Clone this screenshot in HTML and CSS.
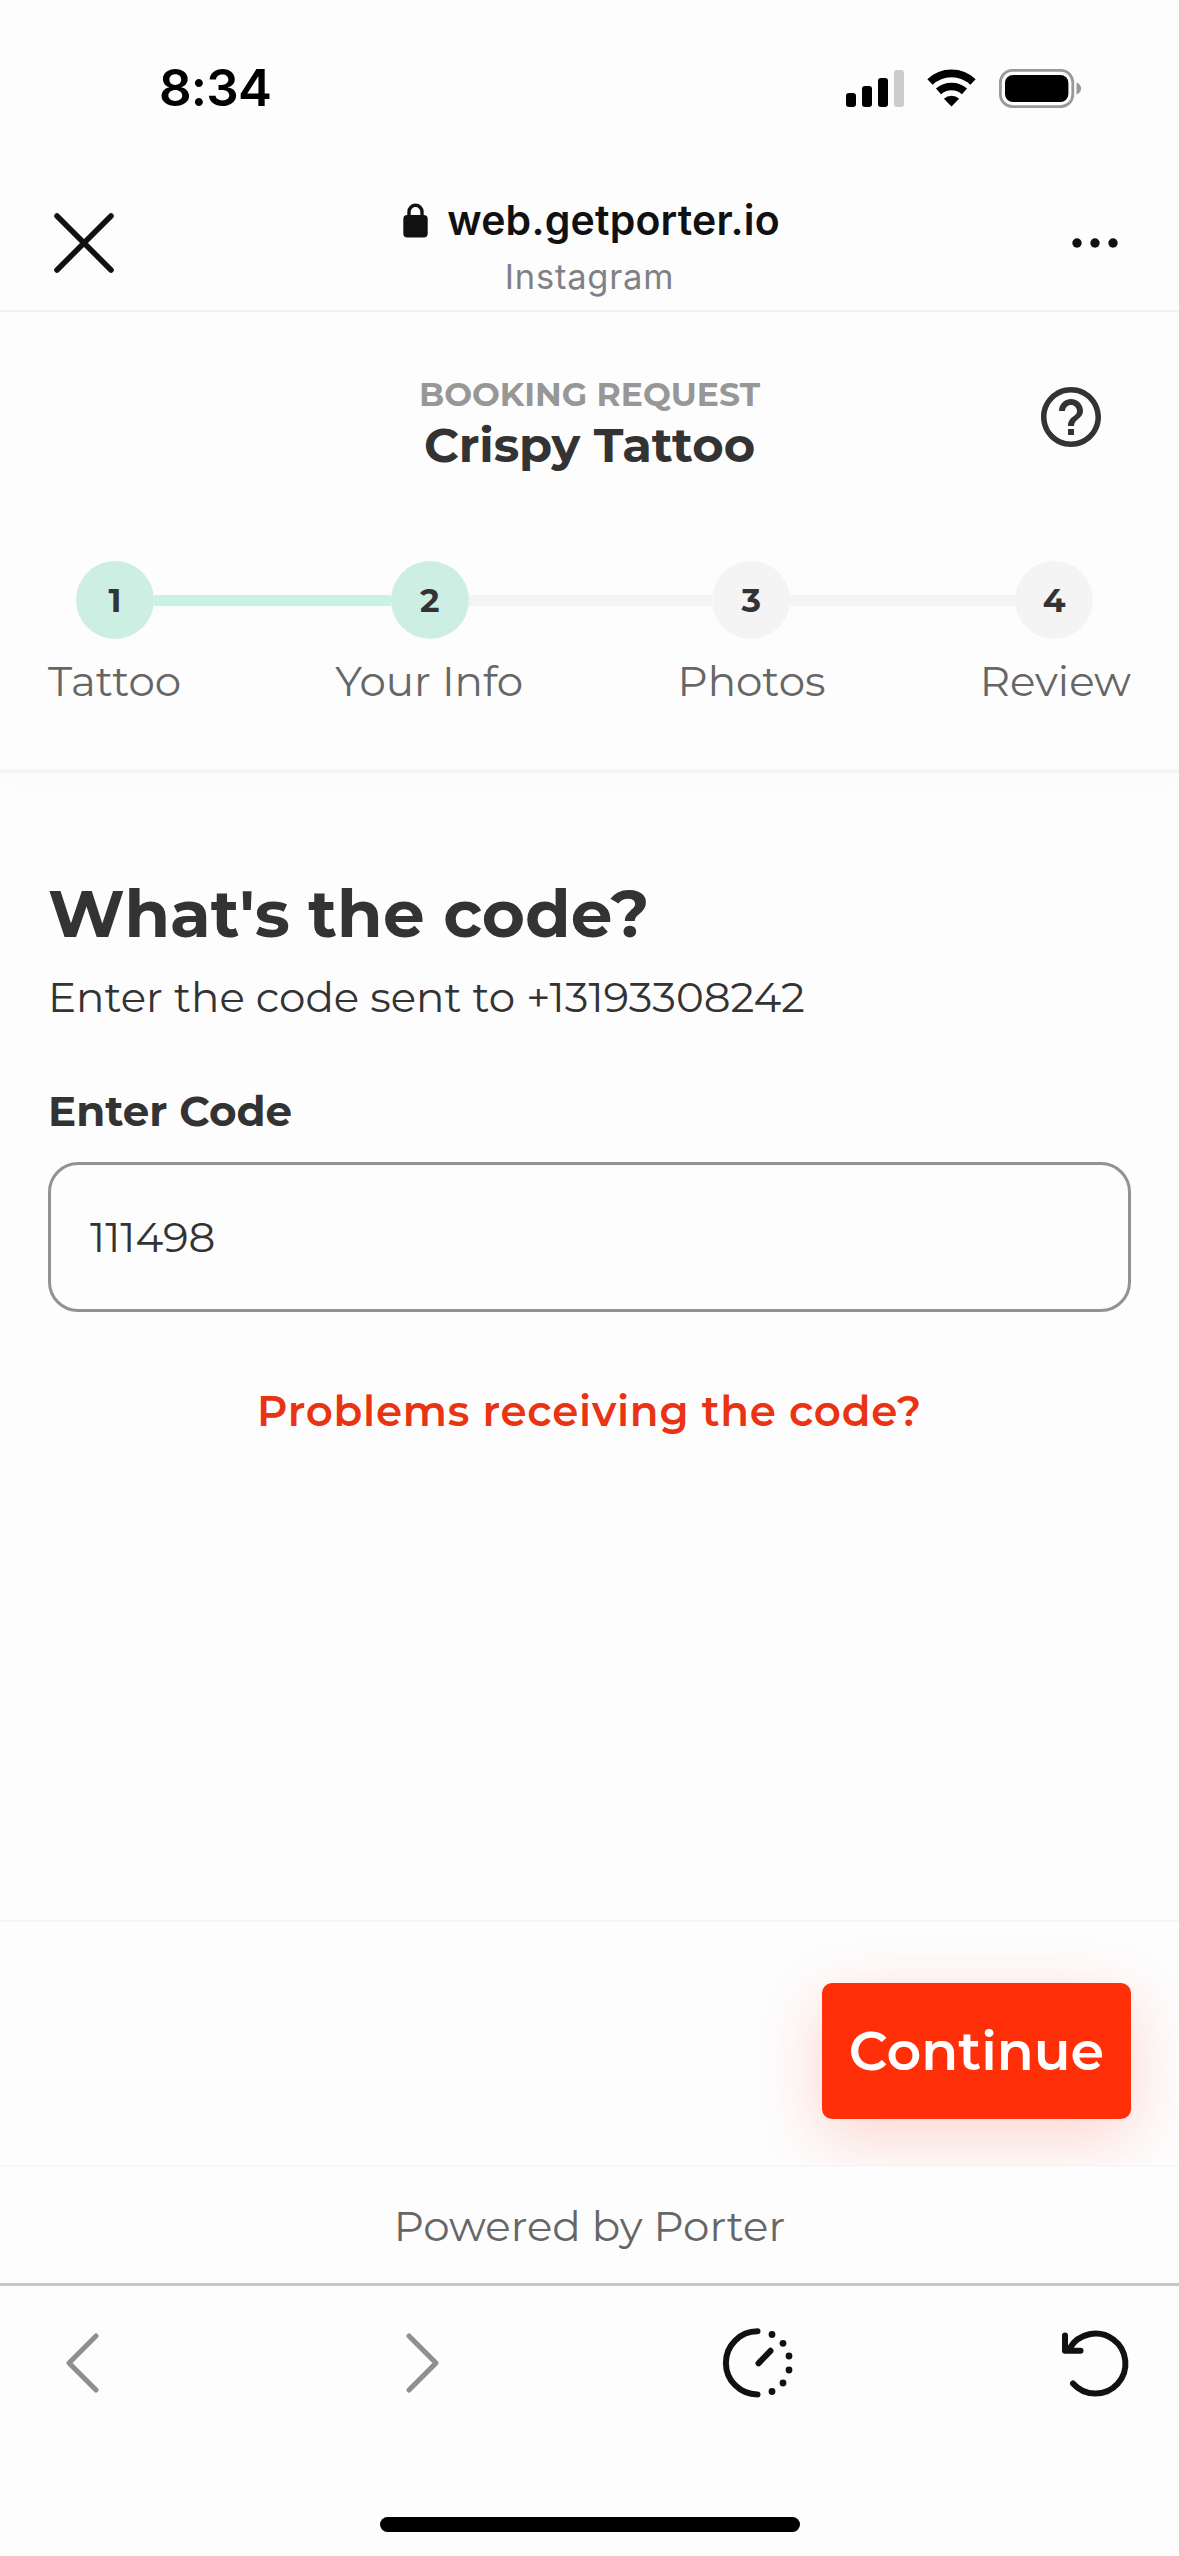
FILE: index.html
```
<!DOCTYPE html>
<html lang="en">
<head>
<meta charset="utf-8">
<meta name="viewport" content="width=device-width">
<title>Booking Request – Crispy Tattoo</title>
<link rel="stylesheet" href="styles.css">
</head>
<body>
<div class="status">
  <span class="time">8:34</span>
  <div class="status-icons">
    <svg class="signal" width="59" height="39" viewBox="0 0 59 39">
      <rect x="0" y="24" width="10" height="14" rx="3"/>
      <rect x="16" y="17" width="10" height="21" rx="3"/>
      <rect x="32" y="9" width="10" height="29" rx="3"/>
      <rect x="48" y="1" width="10" height="37" rx="3" fill="#ccc"/>
    </svg>
    <svg class="wifi" width="50" height="39" viewBox="0 0 50 39">
      <path d="M3 13a31 31 0 0 1 43 0M11.500 22.400a19.500 19.500 0 0 1 26 0" fill="none" stroke="#000" stroke-width="7.600"/>
      <path d="M24.500 37.500l-7.600-7.800a11 11 0 0 1 15.200 0z"/>
    </svg>
    <svg class="battery" width="83" height="39" viewBox="0 0 83 39">
      <rect x="1.400" y="1.400" width="72.400" height="36.200" rx="12" fill="none" stroke="#999" stroke-width="2.800"/>
      <rect x="6" y="6" width="63.400" height="27" rx="8"/>
      <path d="M77.500 13.500c3 1 4.600 3.400 4.600 6s-1.600 5-4.600 6z" fill="#999"/>
    </svg>
  </div>
</div>

<header class="browser">
  <svg width="66" height="66" viewBox="0 0 66 66"><path d="M6 6l54 54M60 6L6 60" fill="none" stroke="#111" stroke-width="5.600" stroke-linecap="round"/></svg>
  <div class="address">
    <div class="url">
      <svg width="25" height="35" viewBox="0 0 25 35"><rect x="0.300" y="12" width="24.400" height="22.500" rx="4" fill="#111"/><path d="M6 14V8.800a6.500 6.500 0 0 1 13 0V14" fill="none" stroke="#111" stroke-width="3.400"/></svg>
      <span>web.getporter.io</span>
    </div>
    <div class="app">Instagram</div>
  </div>
  <svg width="66" height="66" viewBox="0 0 66 66"><g fill="#111"><circle cx="15" cy="33" r="4.700"/><circle cx="33" cy="33" r="4.700"/><circle cx="51" cy="33" r="4.700"/></g></svg>
</header>

<section class="page-header">
  <div class="title-bar">
    <div class="titles">
      <div class="eyebrow">BOOKING REQUEST</div>
      <div class="studio">Crispy Tattoo</div>
    </div>
    <svg class="help" width="72" height="72" viewBox="0 0 24 24"><path fill="#333" d="M11 18h2v-2h-2v2zm1-16C6.480 2 2 6.480 2 12s4.480 10 10 10 10-4.480 10-10S17.520 2 12 2zm0 18.150c-4.500 0-8.150-3.650-8.150-8.150S7.500 3.850 12 3.850s8.150 3.650 8.150 8.150-3.650 8.150-8.150 8.150zm0-14.150c-2.210 0-4 1.790-4 4h2c0-1.100.9-2 2-2s2 .9 2 2c0 2-3 1.750-3 5h2c0-2.250 3-2.500 3-5 0-2.210-1.790-4-4-4z"/></svg>
  </div>
  <div class="track">
    <span class="dot done">1</span><i class="link first done"></i>
    <span class="dot done">2</span><i class="link second"></i>
    <span class="dot">3</span><i class="link third"></i>
    <span class="dot">4</span>
  </div>
  <div class="labels"><span>Tattoo</span><span>Your Info</span><span>Photos</span><span>Review</span></div>
</section>

<main>
  <h1>What's the code?</h1>
  <p class="hint">Enter the code sent to +13193308242</p>
  <label for="code">Enter Code</label>
  <input id="code" type="text" value="111498">
  <a class="problems">Problems receiving the code?</a>
</main>

<div class="actions"><button type="button">Continue</button></div>
<footer>Powered by Porter</footer>

<nav class="toolbar">
  <svg width="80" height="80" viewBox="0 0 80 80"><path d="M54 13L27 40l27 27" fill="none" stroke="#8f8f8f" stroke-width="5.200" stroke-linecap="round" stroke-linejoin="round"/></svg>
  <svg width="80" height="80" viewBox="0 0 80 80"><path d="M29 13l27 27-27 27" fill="none" stroke="#8f8f8f" stroke-width="5.200" stroke-linecap="round" stroke-linejoin="round"/></svg>
  <svg width="80" height="80" viewBox="0 0 80 80">
    <path d="M39.500 8.300a31.600 31.600 0 0 0 0 63.200M40.500 40.300L52.500 27.800" fill="none" stroke="#111" stroke-width="6" stroke-linecap="round"/>
    <g fill="#111"><circle cx="54" cy="11.500" r="3.400"/><circle cx="65" cy="20.300" r="3.400"/><circle cx="71" cy="33" r="3.400"/><circle cx="71" cy="47" r="3.400"/><circle cx="65" cy="60" r="3.400"/><circle cx="54" cy="68.500" r="3.400"/></g>
  </svg>
  <svg width="80" height="80" viewBox="0 0 80 80"><path d="M17 60.500A30 30 0 1 0 13.500 25.500L9 27.500M9 12.500v15.200h15.500" fill="none" stroke="#111" stroke-width="6" stroke-linecap="round" stroke-linejoin="round"/></svg>
</nav>
<div class="home"><i></i></div>
</body>
</html>
```
FILE: styles.css
```
* { box-sizing: border-box; }

body {
  margin: 0;
  width: 1179px;
  height: 2556px;
  display: flex;
  flex-direction: column;
  background: #fdfdfd;
  color: #333;
  font-family: Montserrat, Inter, sans-serif;
  overflow: hidden;
}

svg { display: block; flex: none; }

/* Phone status bar */
.status {
  height: 176px;
  padding: 0 97px 0 159px;
  display: flex;
  align-items: center;
  justify-content: space-between;
}
.time {
  font: 600 51px/60px Inter, sans-serif;
  letter-spacing: -0.8px;
  color: #000;
}
.status-icons { display: flex; }
.wifi { margin-left: 22px; }
.battery { margin-left: 22px; }

/* In-app browser header */
.browser {
  height: 136px;
  padding: 0 51px;
  display: flex;
  align-items: center;
  justify-content: space-between;
  border-bottom: 2px solid #f3f3f3;
  font-family: Inter, sans-serif;
}
.address { padding-top: 11px; text-align: center; }
.url {
  padding-left: 4px;
  display: flex;
  align-items: center;
  justify-content: center;
  gap: 19px;
  color: #111;
  font-size: 41px;
  font-weight: 600;
  line-height: 57px;
  letter-spacing: 0.2px;
}
.app {
  color: #808186;
  font-size: 34.5px;
  line-height: 56px;
  letter-spacing: 0.8px;
}

/* Booking header with progress */
.page-header {
  height: 461px;
  padding-top: 59px;
  border-bottom: 4px solid #f4f4f4;
  box-shadow: 0 18px 10px -4px rgba(0, 0, 0, 0.012);
}
.title-bar {
  display: grid;
  grid-template-columns: 1fr auto 1fr;
  padding: 0 72px;
}
.titles { grid-column: 2; text-align: center; }
.eyebrow {
  color: #979797;
  font-size: 33px;
  font-weight: 700;
  line-height: 46px;
}
.studio {
  font-size: 48px;
  font-weight: 700;
  line-height: 56px;
}
.help { justify-self: end; margin-top: 10px; }
.track {
  margin-top: 88px;
  padding: 0 86px 0 76px;
  display: flex;
  align-items: center;
}
.dot {
  width: 78px;
  height: 78px;
  flex: none;
  border-radius: 50%;
  background: #f4f4f4;
  font-size: 33px;
  font-weight: 700;
  line-height: 78px;
  text-align: center;
}
.dot.done { background: #cdeee3; }
.link { height: 11px; background: #f4f4f4; }
.link.done { background: #c8f2e4; }
.first { flex: 237; }
.second { flex: 244; }
.third { flex: 225; }
.labels {
  margin-top: 17px;
  padding: 0 48px;
  display: flex;
  justify-content: space-between;
  color: #666;
  font-size: 42px;
  line-height: 50px;
}

/* Code form */
main {
  flex: 1;
  padding: 101px 48px 0;
  display: flex;
  flex-direction: column;
}
h1 {
  margin: 0;
  font-size: 66px;
  font-weight: 700;
  line-height: 80px;
}
.hint {
  margin: 15px 0 0;
  font-size: 42px;
  line-height: 56px;
}
label {
  margin-top: 61px;
  font-size: 42px;
  font-weight: 700;
  line-height: 50px;
}
input {
  margin: 26px 0 0;
  width: 100%;
  height: 150px;
  padding: 0 39px;
  border: 3px solid #929292;
  border-radius: 30px;
  background: transparent;
  color: #333;
  font: 400 42px Montserrat, Inter, sans-serif;
}
.problems {
  margin-top: 74px;
  color: #ea3313;
  font-size: 42px;
  font-weight: 600;
  line-height: 50px;
  letter-spacing: 0.75px;
  text-align: center;
}

/* Action bar */
.actions {
  height: 247px;
  padding: 61px 48px 0;
  display: flex;
  justify-content: flex-end;
  align-items: flex-start;
  border-top: 2px solid #f5f5f5;
  border-bottom: 2px solid #f7f7f7;
  overflow: hidden;
}
button {
  width: 309px;
  height: 136px;
  padding: 0;
  border: 0;
  border-radius: 10px;
  background: #ff2f0a;
  box-shadow: 0 18px 66px rgba(255, 47, 10, 0.2);
  color: #fff;
  font: 600 54px Montserrat, Inter, sans-serif;
}
footer {
  height: 116px;
  color: #666;
  font-size: 42px;
  line-height: 118px;
  text-align: center;
}

/* Browser toolbar */
.toolbar {
  height: 157px;
  padding: 0 43px 0 42px;
  display: flex;
  align-items: center;
  justify-content: space-between;
  border-top: 3px solid #c6c6c6;
}
.home {
  height: 116px;
  padding-top: 77px;
  display: flex;
  justify-content: center;
}
.home i {
  width: 420px;
  height: 15px;
  border-radius: 8px;
  background: #000;
}
```
